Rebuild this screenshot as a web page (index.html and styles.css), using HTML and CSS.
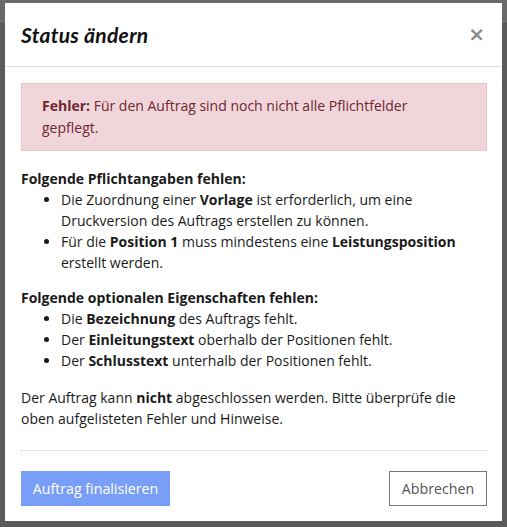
FILE: index.html
```html
<!DOCTYPE html>
<html lang="de">
<head>
<meta charset="utf-8">
<title>Status ändern</title>
<link rel="stylesheet" href="styles.css">
</head>
<body>
<div class="backdrop">
  <div class="modal">
    <div class="modal-header">
      <h2 class="modal-title">Status ändern</h2>
      <span class="close">×</span>
    </div>
    <div class="modal-body">
      <div class="alert"><strong>Fehler:</strong> Für den Auftrag sind noch nicht alle Pflichtfelder gepflegt.</div>
      <p class="group-title">Folgende Pflichtangaben fehlen:</p>
      <ul class="list">
        <li>Die Zuordnung einer <strong>Vorlage</strong> ist erforderlich, um eine Druckversion des Auftrags erstellen zu können.</li>
        <li>Für die <strong>Position 1</strong> muss mindestens eine <strong>Leistungsposition</strong> erstellt werden.</li>
      </ul>
      <p class="group-title">Folgende optionalen Eigenschaften fehlen:</p>
      <ul class="list">
        <li>Die <strong>Bezeichnung</strong> des Auftrags fehlt.</li>
        <li>Der <strong>Einleitungstext</strong> oberhalb der Positionen fehlt.</li>
        <li>Der <strong>Schlusstext</strong> unterhalb der Positionen fehlt.</li>
      </ul>
      <p class="note">Der Auftrag kann <strong>nicht</strong> abgeschlossen werden. Bitte überprüfe die oben aufgelisteten Fehler und Hinweise.</p>
    </div>
    <div class="modal-footer">
      <button class="btn btn-primary">Auftrag finalisieren</button>
      <button class="btn btn-secondary">Abbrechen</button>
    </div>
  </div>
</div>
</body>
</html>
```
FILE: styles.css
```css
html, body {
  margin: 0;
  padding: 0;
}
body {
  background: #5b5b5b;
  font-family: "Open Sans", "Liberation Sans", sans-serif;
  font-size: 14px;
  color: #1a1a1a;
}
.backdrop {
  min-height: 527px;
  background: linear-gradient(to bottom, #696969 0, #696969 21px, #7a7a7a 21px, #7a7a7a 22px, #5b5b5b 22px);
  padding: 3px 5px 0 5px;
  box-sizing: border-box;
}
.modal {
  width: 497px;
  height: 518px;
  background: #fff;
  box-sizing: border-box;
  display: flex;
  flex-direction: column;
}
.modal-header {
  height: 64px;
  box-sizing: border-box;
  border-bottom: 1px solid #dedede;
  display: flex;
  align-items: center;
  justify-content: space-between;
  padding: 0 17px 0 16px;
}
.modal-title {
  margin: 0;
  font-family: "Lato", "Open Sans", sans-serif;
  font-style: italic;
  font-weight: 700;
  font-size: 21px;
  color: #111;
  letter-spacing: 0.3px;
}
.close {
  font-family: "DejaVu Sans", sans-serif;
  font-weight: 700;
  font-size: 20px;
  color: #8a8a8a;
  line-height: 1;
  margin-top: -2px;
}
.modal-body {
  padding: 16px 15px 0 16px;
  flex: 1;
}
.alert {
  background: #f0d6da;
  border: 1px solid #e9c3c9;
  color: #6f2730;
  padding: 11px 20px 11px 20px;
  line-height: 22px;
}
.group-title {
  font-weight: 700;
  margin: 17px 0 0 0;
  line-height: 21px;
}
.list {
  margin: 0;
  padding-left: 40px;
  line-height: 21px;
}
.list + .group-title {
  margin-top: 14px;
}
.note {
  margin: 16px 0 0 0;
  line-height: 21px;
}
.modal-footer {
  margin: 0 15px 0 16px;
  border-top: 1px dotted #c9c9c9;
  display: flex;
  justify-content: space-between;
  padding: 20px 0 15px 0;
}
.btn {
  font-family: "Open Sans", "Liberation Sans", sans-serif;
  font-size: 14.2px;
  height: 35px;
  padding: 0;
  border-radius: 0;
  white-space: nowrap;
  cursor: pointer;
  line-height: 33px;
}
.btn-primary {
  background: #789ef8;
  border: none;
  color: #fff;
  width: 149px;
}
.btn-secondary {
  background: #fff;
  border: 1px solid #777;
  color: #555;
  width: 98px;
}
```
